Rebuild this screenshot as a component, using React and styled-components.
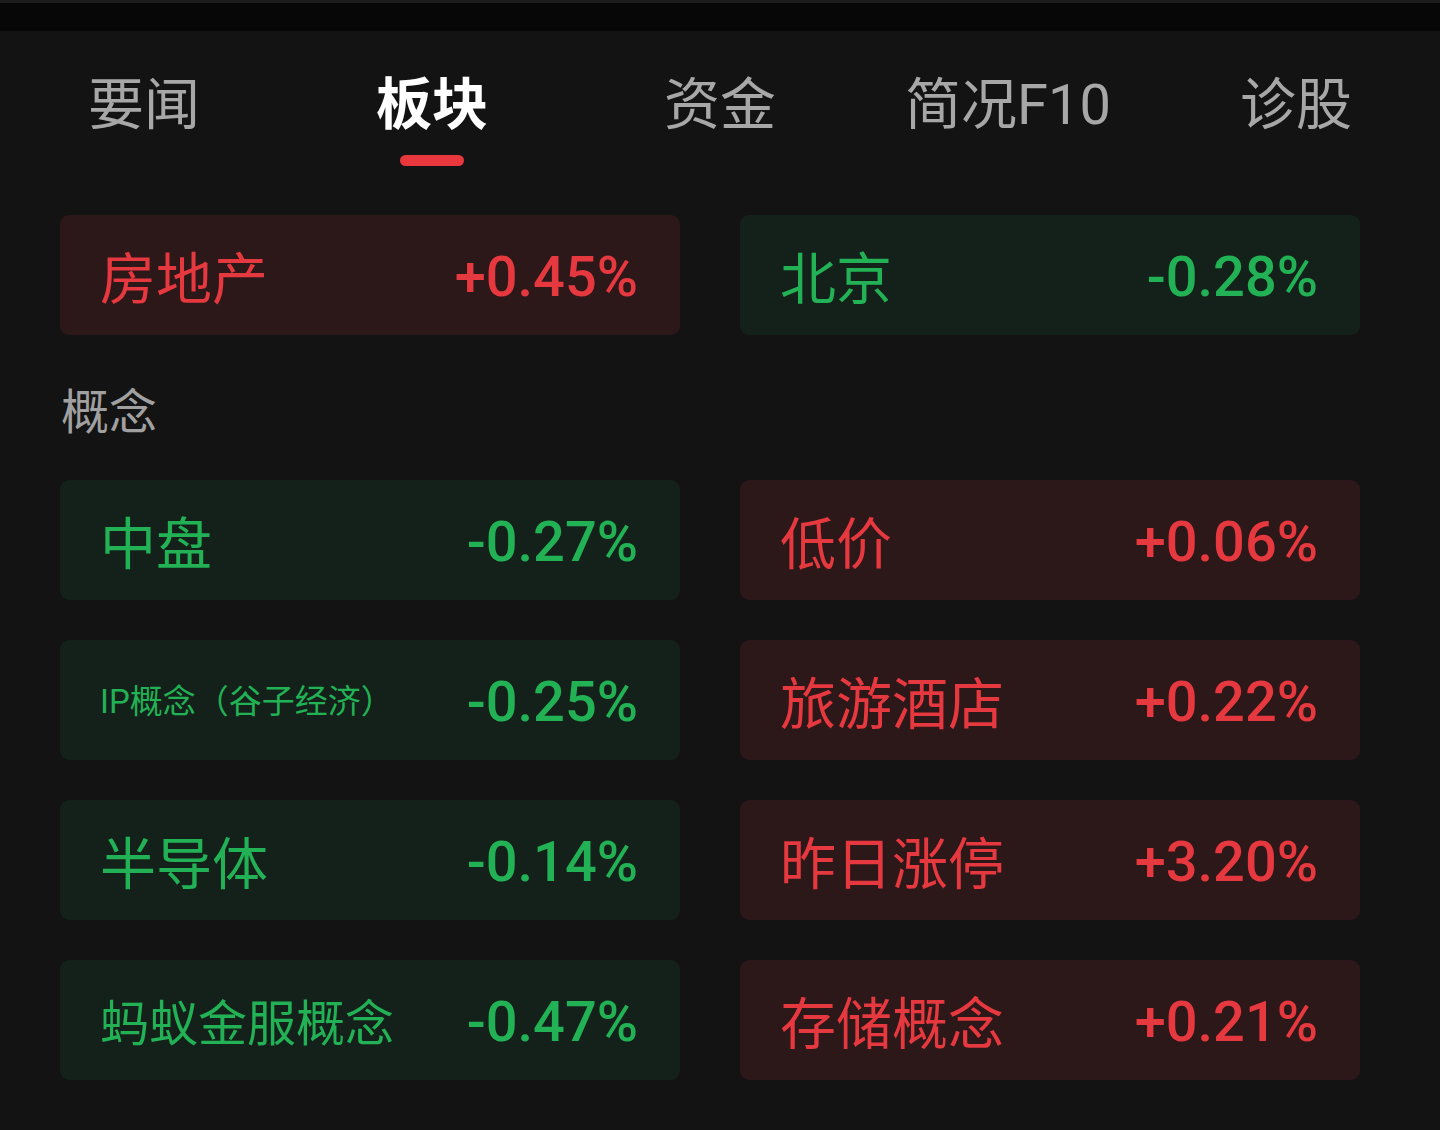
import React from "react";
import styled, { createGlobalStyle } from "styled-components";

const GlobalStyle = createGlobalStyle`
  html, body {
    margin: 0;
    padding: 0;
    background: #131313;
  }
  body {
    font-family: Roboto, "Noto Sans CJK SC", sans-serif;
  }
`;

const tabs = ["要闻", "板块", "资金", "简况F10", "诊股"];

const industry = [
  { name: "房地产", change: "+0.45%", up: true },
  { name: "北京", change: "-0.28%", up: false },
];

const concepts = [
  { name: "中盘", change: "-0.27%", up: false },
  { name: "低价", change: "+0.06%", up: true },
  { name: "IP概念（谷子经济）", change: "-0.25%", up: false, size: 33 },
  { name: "旅游酒店", change: "+0.22%", up: true },
  { name: "半导体", change: "-0.14%", up: false },
  { name: "昨日涨停", change: "+3.20%", up: true },
  { name: "蚂蚁金服概念", change: "-0.47%", up: false, size: 49 },
  { name: "存储概念", change: "+0.21%", up: true },
];

const App = () => {
  return (
    <Page>
      <GlobalStyle />
      <StatusStrip />
      <TabBar>
        {tabs.map((t, i) => (
          <Tab key={t}>
            <TabLabel active={i === 1}>{t}</TabLabel>
            <Indicator active={i === 1} />
          </Tab>
        ))}
      </TabBar>
      <Content>
        <Grid>
          {industry.map((b) => (
            <Block key={b.name} up={b.up}>
              <BlockName up={b.up} size={b.size}>{b.name}</BlockName>
              <BlockChange up={b.up}>{b.change}</BlockChange>
            </Block>
          ))}
        </Grid>
        <SectionTitle>概念</SectionTitle>
        <Grid>
          {concepts.map((b) => (
            <Block key={b.name} up={b.up}>
              <BlockName up={b.up} size={b.size}>{b.name}</BlockName>
              <BlockChange up={b.up}>{b.change}</BlockChange>
            </Block>
          ))}
        </Grid>
      </Content>
    </Page>
  );
};

export default App;

const Page = styled.div`
  width: 1440px;
  min-height: 1130px;
  background: #131313;
`;

const StatusStrip = styled.div`
  height: 28px;
  background: #070707;
  border-top: 3px solid #1c1c1c;
`;

const TabBar = styled.div`
  display: grid;
  grid-template-columns: repeat(5, 1fr);
  padding-top: 42px;
`;

const Tab = styled.div`
  display: flex;
  flex-direction: column;
  align-items: center;
`;

const TabLabel = styled.div`
  font-size: 56px;
  line-height: 64px;
  color: ${(p) => (p.active ? "#ffffff" : "#a7a7a7")};
  font-weight: ${(p) => (p.active ? 700 : 400)};
  white-space: nowrap;
`;

const Indicator = styled.div`
  margin-top: 18px;
  width: 64px;
  height: 11px;
  border-radius: 6px;
  background: ${(p) => (p.active ? "#e8383d" : "transparent")};
`;

const Content = styled.div`
  padding: 49px 80px 0 60px;
`;

const Grid = styled.div`
  display: grid;
  grid-template-columns: 620px 620px;
  gap: 40px 60px;
`;

const Block = styled.div`
  height: 120px;
  border-radius: 9px;
  background: ${(p) => (p.up ? "#2c1719" : "#13211a")};
  display: flex;
  align-items: center;
  justify-content: space-between;
  padding: 0 42px 0 40px;
  box-sizing: border-box;
`;

const BlockName = styled.div`
  font-size: ${(p) => p.size || 56}px;
  color: ${(p) => (p.up ? "#e5383f" : "#22b155")};
  white-space: nowrap;
  margin-top: -2px;
`;

const BlockChange = styled.div`
  font-family: Roboto, sans-serif;
  font-weight: 500;
  font-size: 56px;
  color: ${(p) => (p.up ? "#e5383f" : "#22b155")};
  margin-top: 4px;
`;

const SectionTitle = styled.div`
  height: 145px;
  display: flex;
  align-items: center;
  padding-left: 1px;
  font-size: 48px;
  color: #a0a0a0;
`;
